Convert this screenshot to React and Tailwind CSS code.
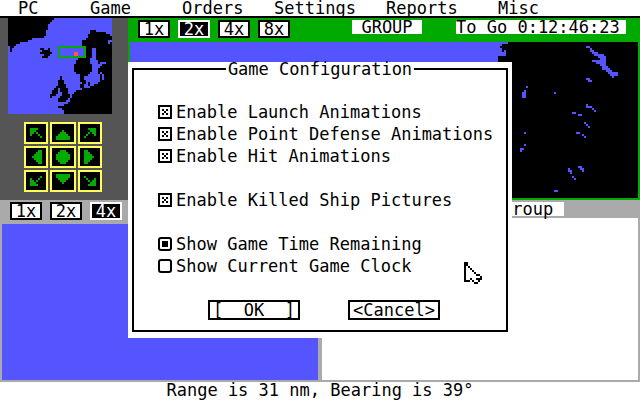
import { useState } from "react";
import clsx from "clsx";

const menus = [
  { name: "PC", width: "w-[72px]" },
  { name: "Game", width: "w-[92px]" },
  { name: "Orders", width: "w-[92px]" },
  { name: "Settings", width: "w-28" },
  { name: "Reports", width: "w-28" },
  { name: "Misc", width: "w-16" },
];

// one unit is a 2px block, the inside of a button is 10 or 11 by 9
const arrows = [
  { name: "North west", d: "M2 2h4v1h-1v1h1v1h1v1h1v1h-1v-1h-1v-1h-1v-1h-1v1h-1v1h-1z" },
  { name: "North", d: "M5 3h1v1h1v1h1v1h1v2h-7v-2h1v-1h1v-1h1z" },
  { name: "North east", d: "M8 2h-4v1h1v1h-1v1h-1v1h-1v1h1v-1h1v-1h1v-1h1v1h1v1h1z" },
  { name: "West", d: "M8 1v7h-2v-1h-1v-1h-1v-1h-1v-1h1v-1h1v-1h1v-1z" },
  { name: "Center", d: "M4 1h3v1h1v1h1v3h-1v1h-1v1h-3v-1h-1v-1h-1v-3h1v-1h1z" },
  { name: "East", d: "M2 1v7h2v-1h1v-1h1v-1h1v-1h-1v-1h-1v-1h-1v-1z" },
  { name: "South west", d: "M2 7h4v-1h-1v-1h1v-1h1v-1h1v-1h-1v1h-1v1h-1v1h-1v-1h-1v-1h-1z" },
  { name: "South", d: "M5 6h1v-1h1v-1h1v-1h1v-2h-7v2h1v1h1v1h1z" },
  { name: "South east", d: "M8 7h-4v-1h1v-1h-1v-1h-1v-1h-1v-1h1v1h1v1h1v1h1v-1h1v-1h1z" },
];

function ZoomButton({ label, active }) {
  return (
    <button
      className={clsx(
        "flex h-[18px] w-8 items-center justify-center border-2",
        active ? "border-white bg-black text-white" : "border-black bg-white text-black"
      )}
    >
      {label}
    </button>
  );
}

function WorldMap() {
  return (
    <svg viewBox="0 0 52 48" shapeRendering="crispEdges" className="mx-2 h-24 w-[104px] bg-[#5555ff]">
      {/* Greenland, Iceland */}
      <path d="M0 0H23V1H22V2H21V3H20V6H19V9H18V10H12V11H10V12H6V13H4V14H3V15H2V17H1V14H0Z" />
      <path d="M16 15H18V16H20V15H21V17H22V18H21V19H20V20H17V19H18V18H16V17H17V16H16Z" />
      {/* Scandinavia and the continent */}
      <path d="M41 6H44V7H49V8H51V9H52V48H28V46H27V45H25V44H28V43H30V42H31V40H32V38H33V37H34V36H37V35H41V34H43V33H45V32H46V28H45V25H46V24H47V23H45V21H44V15H42V20H41V23H42V27H41V28H40V29H38V30H36V28H34V27H33V23H34V21H35V20H37V19H38V14H37V11H39V10H40V8H41Z" />
      <path d="M36 30H38V31H39V33H38V35H36V33H37V32H36ZM40 32H41V34H40Z" />
      <path d="M50 11H52V12H51V13H50ZM46 22H49V23H46ZM48 31H47V28H46V27H47V28H48Z" fill="#5555ff" />
      {/* Britain, Ireland */}
      <path d="M26 29H27V31H28V33H29V35H30V38H31V40H30V41H29V42H25V40H26V39H27V37H26V35H25V31H26Z" />
      <path d="M24 34H25V38H24V39H22V40H21V38H22V36H23V35H24Z" />
      <path d="M25.5 14.5H38.5V19.5H25.5Z" fill="none" stroke="#00aa00" />
      <path d="M33 17h2v2h-2z" fill="#ff5555" />
    </svg>
  );
}

function CoastMap() {
  return (
    <svg viewBox="0 0 70 78" shapeRendering="crispEdges" fill="#5555ff" className="h-[156px] w-[140px] bg-black">
      <path d="M0 0H5V1H2V2H1V3H2V5H3V4H4V7H0V11H0Z" />
      <path d="M44 2H46V3H47V4H48V5H50V6H53V7H54V12H55V13H56V14H57V15H60V17H58V18H57V17H56V16H55V15H54V14H52V12H51V11H49V10H47V9H51V8H50V7H48V6H47V5H46V3H44Z" />
      <path d="M44 18h2v1h1v1h-2v-1h-1zM12 25h1v-1h1v4h-2zM14 22h1v1h-1zM28 25h1v1h-1zM44 31h1v1h2v1h-3zM47 33h1v1h-1zM48 34h1v1h-1zM37 35h2v1h-2zM40 36h2v1h-2zM43 40h1v1h-1zM44 41h1v1h-1zM45 42h1v1h-1zM39 45h2v1h-2zM42 46h1v1h-1zM43 47h1v1h-1zM13 45h1v1h-1zM13 51h1v1h-1zM11 53h2v1h-1v1h-1zM35 63h1v1h1v2h-1v-1h-1zM37 67h1v1h-1zM38 68h1v1h-1zM40 62h2v1h1v2h-1v-1h-1v-1h-1zM28 74h2v1h-2z" />
    </svg>
  );
}

function CheckRow({ label }) {
  const [checked, setChecked] = useState(true);
  return (
    <label className="flex h-[22px] items-center gap-1">
      <span className="grid size-3.5">
        <input
          type="checkbox"
          checked={checked}
          onChange={(e) => setChecked(e.target.checked)}
          className="size-3.5 appearance-none border-2 border-black [grid-area:1/1]"
        />
        {checked && (
          <svg viewBox="0 0 14 14" shapeRendering="crispEdges" className="pointer-events-none size-3.5 [grid-area:1/1]">
            <path d="M4 4h2v2h-2zM8 4h2v2h-2zM6 6h2v2h-2zM4 8h2v2h-2zM8 8h2v2h-2z" />
          </svg>
        )}
      </span>
      {label}
    </label>
  );
}

function RadioRow({ label, checked, onChange }) {
  return (
    <label className="flex h-[22px] items-center gap-1">
      <span className="grid size-3.5">
        <input
          type="radio"
          name="clock"
          checked={checked}
          onChange={onChange}
          className="size-3.5 appearance-none rounded-[3px] border-2 border-black [grid-area:1/1]"
        />
        {checked && <span className="pointer-events-none m-1 bg-black [grid-area:1/1]" />}
      </span>
      {label}
    </label>
  );
}

function Pointer() {
  return (
    <svg
      viewBox="0 0 9 11"
      shapeRendering="crispEdges"
      className="pointer-events-none absolute right-[30px] bottom-[54px] h-[22px] w-[18px]"
    >
      <path d="M0 0H1L9 7V9H8V10H7V11H5V10H0Z" fill="#fff" />
      <path d="M0 0h1v10h-1zM1 0h1v2h-1zM2 2h1v1h-1zM3 3h1v1h-1zM4 4h1v1h-1zM5 5h1v1h-1zM6 6h1v1h-1zM7 6h1v1h-1zM8 7h1v2h-1zM6 8h2v1h-2zM7 9h1v1h-1zM5 10h2v1h-2zM1 9h2v1h-2zM3 8h1v1h-1zM4 9h1v1h-1z" />
    </svg>
  );
}

function ConfigDialog() {
  const [clock, setClock] = useState("remaining");

  return (
    <div role="dialog" aria-label="Game Configuration" className="relative w-96 bg-white px-1 pb-1.5">
      <fieldset className="border-2 border-black pb-2.5">
        <legend className="mx-auto px-0.5 leading-[14px]">Game Configuration</legend>
        <div className="flex flex-col pt-[25px] pl-6">
          <CheckRow label="Enable Launch Animations" />
          <CheckRow label="Enable Point Defense Animations" />
          <CheckRow label="Enable Hit Animations" />
          <div className="flex flex-col py-[22px]">
            <CheckRow label="Enable Killed Ship Pictures" />
          </div>
          <RadioRow
            label="Show Game Time Remaining"
            checked={clock === "remaining"}
            onChange={() => setClock("remaining")}
          />
          <RadioRow
            label="Show Current Game Clock"
            checked={clock === "current"}
            onChange={() => setClock("current")}
          />
        </div>
        <div className="flex justify-center gap-12 pt-[23px] pl-2">
          <button className="flex h-5 w-[92px] items-center justify-center border-2 border-black whitespace-pre">
            {"[  OK  ]"}
          </button>
          <button className="flex h-5 w-[92px] items-center justify-center border-2 border-black">
            {"<Cancel>"}
          </button>
        </div>
      </fieldset>
      <Pointer />
    </div>
  );
}

export default function App() {
  return (
    <div className="relative flex min-h-screen flex-col bg-white font-['DejaVu_Sans_Mono',monospace] text-[17px] leading-4 text-black">
      <nav className="flex border-b-2 border-black pl-[18px]">
        {menus.map((m) => (
          <button key={m.name} className={clsx("h-4 text-left", m.width)}>
            {m.name}
          </button>
        ))}
      </nav>

      <div className="flex">
        <aside className="flex w-32 flex-col gap-2 bg-[#555555] pb-2">
          <WorldMap />
          <div className="ml-6 grid grid-cols-[24px_26px_24px] gap-0.5">
            {arrows.map((a, i) => (
              <button
                key={a.name}
                aria-label={a.name}
                className="h-[22px] border-2 border-[#ffff55] bg-black"
              >
                <svg
                  viewBox={i % 3 === 1 ? "0 0 11 9" : "0 0 10 9"}
                  shapeRendering="crispEdges"
                  fill="#00aa00"
                  className="block h-[18px] w-full"
                >
                  <path d={a.d} />
                </svg>
              </button>
            ))}
          </div>
        </aside>

        <main className="flex flex-1 flex-col border-2 border-t-0 border-[#00aa00] bg-[#5555ff]">
          <div className="flex h-6 items-start bg-[#00aa00] pt-0.5 pr-3 pl-2">
            <div className="flex gap-2">
              <ZoomButton label="1x" />
              <ZoomButton label="2x" active />
              <ZoomButton label="4x" />
              <ZoomButton label="8x" />
            </div>
            <div className="ml-auto flex gap-[34px] leading-[14px]">
              <div className="w-[70px] bg-white text-center">GROUP</div>
              <div className="w-[170px] bg-white">To Go 0:12:46:23</div>
            </div>
          </div>
          <div className="flex flex-1 justify-end">
            <CoastMap />
          </div>
        </main>
      </div>

      <div className="flex flex-1">
        <section className="flex flex-1 flex-col border-2 border-t-0 border-[#aaaaaa] bg-[#5555ff]">
          <div className="flex h-6 gap-2 bg-[#aaaaaa] pt-0.5 pl-2">
            <ZoomButton label="1x" />
            <ZoomButton label="2x" />
            <ZoomButton label="4x" active />
          </div>
        </section>
        <section className="flex flex-1 flex-col border-2 border-t-0 border-[#aaaaaa] bg-white">
          <div className="flex h-[18px] justify-end bg-[#aaaaaa] pt-0.5 pr-[74px]">
            <div className="h-3.5 w-[70px] bg-white pl-2 leading-[14px]">Group</div>
          </div>
        </section>
      </div>

      <footer className="h-[18px] text-center">Range is 31 nm, Bearing is 39°</footer>

      <div className="absolute inset-0 flex items-center justify-center">
        <ConfigDialog />
      </div>
    </div>
  );
}
